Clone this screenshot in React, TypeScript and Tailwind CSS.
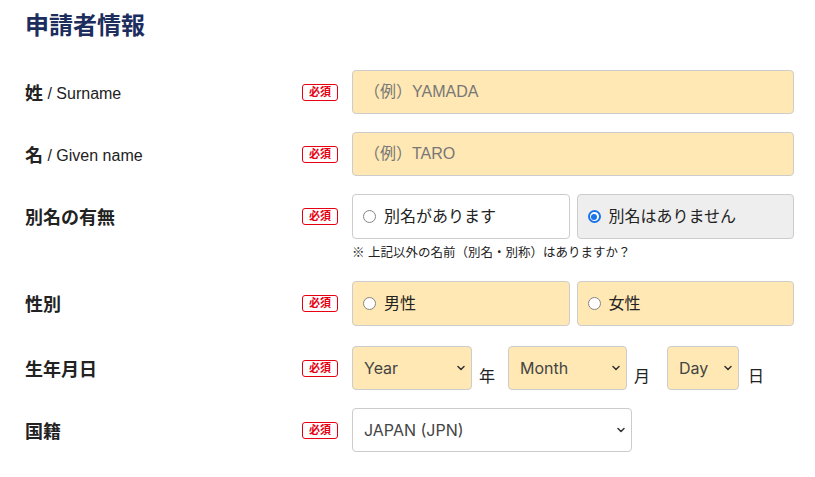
import React from "react";

const jp = { fontFamily: '"Liberation Sans", "Noto Sans CJK JP", sans-serif' };
const ui = { fontFamily: 'Inter, "Noto Sans CJK JP", sans-serif' };

function Badge() {
  return (
    <span
      className="inline-flex items-center justify-center w-[36px] h-[17px] border border-[#e60012] rounded-[3px] text-[11px] font-bold text-[#e60012] leading-none"
      style={jp}
    >
      必須
    </span>
  );
}

function Chevron() {
  return (
    <svg width="8" height="6" viewBox="0 0 8 6" className="absolute right-[6px] top-1/2 -translate-y-1/2 pointer-events-none">
      <path d="M1 1.5 L4 4.5 L7 1.5" fill="none" stroke="#333" strokeWidth="1.5" strokeLinecap="round" strokeLinejoin="round" />
    </svg>
  );
}

function Select({ w, label, bg }: { w: string; label: string; bg: string }) {
  return (
    <div className={`relative h-[44px] ${w} ${bg} border border-[#cccccc] rounded-[4px] flex items-center pl-[11px] text-[16px] text-[#444]`} style={ui}>
      {label}
      <Chevron />
    </div>
  );
}

function Radio({ checked }: { checked?: boolean }) {
  if (checked) {
    return (
      <span className="w-[13px] h-[13px] rounded-full border-[2px] border-[#1a73e8] bg-white flex items-center justify-center">
        <span className="w-[6px] h-[6px] rounded-full bg-[#1a73e8]" />
      </span>
    );
  }
  return <span className="w-[13px] h-[13px] rounded-full border border-[#858585] bg-white" />;
}

function Row({ label, children, start }: { label: React.ReactNode; children: React.ReactNode; start?: boolean }) {
  return (
    <div className={`flex ${start ? "items-start" : "items-center"}`}>
      <div className={`w-[277px] text-[#222] flex items-center pt-[4px] ${start ? "h-[45px]" : ""}`} style={jp}>
        {label}
      </div>
      <div className={`w-[50px] flex items-center ${start ? "h-[45px]" : ""}`}>
        <Badge />
      </div>
      <div className="flex-1">{children}</div>
    </div>
  );
}

export default function App() {
  return (
    <div className="w-[815px] h-[477px] bg-white pl-[25px] pt-[11px]" style={jp}>
      <h1 className="text-[24px] font-bold text-[#1c2d5e] leading-[30px]">申請者情報</h1>
      <div className="mt-[29px] w-[769px] flex flex-col">
        <Row label={<><span className="font-bold text-[18px]">姓</span><span className="text-[16px]">&nbsp;/ Surname</span></>}>
          <div className="h-[44px] w-[442px] bg-[#ffe8b3] border border-[#cccccc] rounded-[4px] flex items-center pl-[11px] text-[16px] text-[#777]">
            （例）YAMADA
          </div>
        </Row>
        <div className="h-[18px]" />
        <Row label={<><span className="font-bold text-[18px]">名</span><span className="text-[16px]">&nbsp;/ Given name</span></>}>
          <div className="h-[44px] w-[442px] bg-[#ffe8b3] border border-[#cccccc] rounded-[4px] flex items-center pl-[11px] text-[16px] text-[#777]">
            （例）TARO
          </div>
        </Row>
        <div className="h-[18px]" />
        <Row start label={<span className="font-bold text-[18px]">別名の有無</span>}>
          <div className="grid grid-cols-2 gap-[7px] w-[442px]">
            <div className="h-[45px] bg-white border border-[#cccccc] rounded-[4px] flex items-center pl-[10px] gap-[8px] text-[16px] text-[#222]">
              <Radio />
              別名があります
            </div>
            <div className="h-[45px] bg-[#eeeeee] border border-[#cccccc] rounded-[4px] flex items-center pl-[10px] gap-[8px] text-[16px] text-[#222]">
              <Radio checked />
              別名はありません
            </div>
          </div>
          <div className="mt-[6px] text-[12.5px] leading-[16px] text-[#222]">※ 上記以外の名前（別名・別称）はありますか？</div>
        </Row>
        <div className="h-[20px]" />
        <Row label={<span className="font-bold text-[18px]">性別</span>}>
          <div className="grid grid-cols-2 gap-[7px] w-[442px]">
            <div className="h-[45px] bg-[#ffe8b3] border border-[#cccccc] rounded-[4px] flex items-center pl-[10px] gap-[8px] text-[16px] text-[#222]">
              <Radio />
              男性
            </div>
            <div className="h-[45px] bg-[#ffe8b3] border border-[#cccccc] rounded-[4px] flex items-center pl-[10px] gap-[8px] text-[16px] text-[#222]">
              <Radio />
              女性
            </div>
          </div>
        </Row>
        <div className="h-[20px]" />
        <Row label={<span className="font-bold text-[18px]">生年月日</span>}>
          <div className="flex items-end">
            <Select w="w-[120px]" label="Year" bg="bg-[#ffe8b3]" />
            <span className="ml-[7px] mb-[1px] text-[16px] text-[#222]">年</span>
            <div className="ml-[13px]">
              <Select w="w-[119px]" label="Month" bg="bg-[#ffe8b3]" />
            </div>
            <span className="ml-[7px] mb-[1px] text-[16px] text-[#222]">月</span>
            <div className="ml-[17px]">
              <Select w="w-[72px]" label="Day" bg="bg-[#ffe8b3]" />
            </div>
            <span className="ml-[9px] mb-[1px] text-[16px] text-[#222]">日</span>
          </div>
        </Row>
        <div className="h-[18px]" />
        <Row label={<span className="font-bold text-[18px]">国籍</span>}>
          <Select w="w-[280px]" label="JAPAN (JPN)" bg="bg-white" />
        </Row>
      </div>
    </div>
  );
}
